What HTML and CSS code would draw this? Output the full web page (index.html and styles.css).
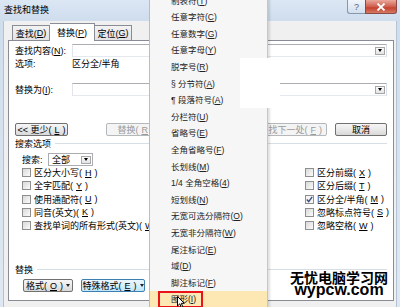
FILE: index.html
```html
<!DOCTYPE html>
<html lang="zh-CN">
<head>
  <meta charset="UTF-8">
  <meta name="viewport" content="width=device-width, initial-scale=1.0">
  <title>查找和替换</title>
  <link rel="stylesheet" href="styles.css">
</head>
<body>
  <div class="win">
    <div class="titlebar">
      <span class="title">查找和替换</span>
      <div class="caption">
        <span class="cap-help">?</span>
        <span class="cap-close">
          <svg width="10" height="8" viewBox="0 0 10 8"><path d="M1.5 0.5 L8.5 7.5 M8.5 0.5 L1.5 7.5" stroke="#fff" stroke-width="1.8"/></svg>
        </span>
      </div>
    </div>

    <div class="client">
      <div class="tabs">
        <span class="tab t1">查找(<u>D</u>)</span>
        <span class="tab t2 active">替换(<u>P</u>)</span>
        <span class="tab t3">定位(<u>G</u>)</span>
      </div>

      <div class="panel">
        <div class="field">
          <span class="lbl">查找内容(<u>N</u>):</span>
          <div class="combo"><span class="drop"></span></div>
        </div>
        <div class="opts">
          <span class="lbl">选项:</span>
          <span>区分全/半角</span>
        </div>
        <div class="field replace">
          <span class="lbl">替换为(<u>I</u>):</span>
          <div class="combo"><span class="drop"></span></div>
        </div>

        <div class="actions">
          <button class="btn b-less">&lt;&lt; 更少(<u>L</u>)</button>
          <button class="btn b-rep" disabled>替换(<u>R</u>)</button>
          <button class="btn b-all" disabled>全部替换(<u>A</u>)</button>
          <button class="btn b-next" disabled>查找下一处(<u>F</u>)</button>
          <button class="btn b-cancel">取消</button>
        </div>

        <div class="group">搜索选项</div>
        <div class="search">
          <span class="search-lbl">搜索:</span>
          <div class="select">全部<span class="drop"></span></div>
        </div>

        <div class="checks">
          <label class="chk"><span class="box"></span>区分大小写(<u>H</u>)</label>
          <label class="chk"><span class="box"></span>区分前缀(<u>X</u>)</label>
          <label class="chk"><span class="box"></span>全字匹配(<u>Y</u>)</label>
          <label class="chk"><span class="box"></span>区分后缀(<u>T</u>)</label>
          <label class="chk"><span class="box"></span>使用通配符(<u>U</u>)</label>
          <label class="chk"><span class="box on"><svg width="7" height="7" viewBox="0 0 7 7"><path d="M0.8 3.6 L2.7 5.6 L6.2 0.9" fill="none" stroke="#3b4f7a" stroke-width="1.4"/></svg></span>区分全/半角(<u>M</u>)</label>
          <label class="chk"><span class="box"></span>同音(英文)(<u>K</u>)</label>
          <label class="chk"><span class="box"></span>忽略标点符号(<u>S</u>)</label>
          <label class="chk"><span class="box"></span>查找单词的所有形式(英文)(<u>W</u>)</label>
          <label class="chk"><span class="box"></span>忽略空格(<u>W</u>)</label>
        </div>

        <div class="group g2">替换</div>
        <div class="fmt">
          <button class="btn b-fmt">格式(<u>O</u>) <span class="tri"></span></button>
          <button class="btn b-special">特殊格式(<u>E</u>)<span class="tri"></span></button>
        </div>
      </div>
    </div>
  </div>

  <ul class="menu">
    <li>制表符(<u>T</u>)</li>
    <li>任意字符(<u>C</u>)</li>
    <li>任意数字(<u>G</u>)</li>
    <li>任意字母(<u>Y</u>)</li>
    <li>脱字号(<u>R</u>)</li>
    <li>§ 分节符(<u>A</u>)</li>
    <li>¶ 段落符号(<u>A</u>)</li>
    <li>分栏符(<u>U</u>)</li>
    <li>省略号(<u>E</u>)</li>
    <li>全角省略号(<u>F</u>)</li>
    <li>长划线(<u>M</u>)</li>
    <li>1/4 全角空格(<u>4</u>)</li>
    <li>短划线(<u>N</u>)</li>
    <li>无宽可选分隔符(<u>O</u>)</li>
    <li>无宽非分隔符(<u>W</u>)</li>
    <li>尾注标记(<u>E</u>)</li>
    <li>域(<u>D</u>)</li>
    <li>脚注标记(<u>F</u>)</li>
    <li class="hot">
      图形(<u>I</u>)
      <span class="redbox"></span>
      <svg class="pointer" width="8" height="12" viewBox="0 0 8 12"><path d="M0.5 0.5 L0.5 10 L2.8 7.8 L4.4 11.4 L5.8 10.8 L4.3 7.3 L7.3 7.3 Z" fill="#fff" stroke="#000" stroke-width="1"/></svg>
    </li>
  </ul>

  <div class="patch"></div>

  <div class="mark">
    <div class="mark-cn">无忧电脑学习网</div>
    <div class="mark-en">wypcw.com</div>
  </div>
</body>
</html>
```

FILE: styles.css
```css
body { margin: 0; width: 400px; height: 307px; overflow: hidden; position: relative; font: 9px "Liberation Sans", "Noto Sans CJK SC", sans-serif; color: #000; text-autospace: no-autospace; }
u { text-decoration: underline; }

.win { height: 307px; background: linear-gradient(#dce7f4, #cfdded 20px, #dfe8f2); }
.titlebar { height: 21px; display: flex; justify-content: space-between; align-items: flex-start; padding: 0 3px 0 4px; }
.title { line-height: 20px; }
.caption { display: flex; }
.cap-help { width: 18px; height: 14px; box-sizing: border-box; border: 1px solid #8797ad; border-top: none; border-right: none; border-radius: 0 0 0 3px; background: linear-gradient(#f1f5fb, #d3dfee); color: #52657f; display: flex; align-items: center; justify-content: center; font-size: 9px; }
.cap-close { width: 32px; height: 14px; box-sizing: border-box; border: 1px solid #8c4a44; border-top: none; border-radius: 0 0 3px 0; background: linear-gradient(#e9a99b, #d0604f 50%, #c4432f 60%, #d57a63); display: flex; align-items: center; justify-content: center; }

.client { margin: 0 3px; height: 286px; box-sizing: border-box; border-left: 1px solid #b3c3d6; border-right: 1px solid #b3c3d6; background: #f0f0f0; padding: 0 2px 0 4px; }

.tabs { display: flex; align-items: flex-end; height: 19px; padding-left: 4px; }
.tab { height: 15px; box-sizing: border-box; border: 1px solid #898c95; border-bottom: none; background: linear-gradient(#f3f3f3, #e3e3e3); display: flex; align-items: center; justify-content: center; }
.t1 { width: 38px; }
.t2 { width: 45px; }
.t3 { width: 37px; border-left: none; }
.tab.active { height: 18px; margin-bottom: -1px; background: #fff; position: relative; z-index: 1; border-left: none; }

.panel { height: 261px; box-sizing: border-box; border: 1px solid #898c95; background: #fff; padding: 3px 6px 0 6px; }

.field, .opts { display: flex; align-items: center; height: 13px; }
.lbl { width: 57px; flex: none; }
.replace { margin-top: 13px; }
.combo { flex: 1; height: 13px; box-sizing: border-box; border: 1px solid #abadb3; border-color: #abadb3 #dbdfe6 #e3e9ef #e2e3ea; display: flex; justify-content: flex-end; align-items: center; padding-right: 1px; }
.drop { width: 10px; height: 8px; box-sizing: border-box; border: 1px solid #a7a7a7; background: linear-gradient(#fafafa, #e4e4e4); display: flex; align-items: center; justify-content: center; }
.drop::after { content: ""; border-top: 3px solid #000; border-left: 2.5px solid transparent; border-right: 2.5px solid transparent; }

.actions { display: flex; margin-top: 27px; height: 13px; }
.btn { font: inherit; color: #000; padding: 0; height: 13px; box-sizing: border-box; border: 1px solid #707070; border-radius: 2px; background: linear-gradient(#f6f6f6, #e9e9e9 50%, #d8d8d8); display: flex; align-items: center; justify-content: center; gap: 3px; }
.btn:disabled { border-color: #b5b8ba; background: #f4f4f4; color: #9a9a9a; }
.b-less { width: 53px; }
.b-rep { width: 60px; margin-left: 38px; }
.b-all { width: 73px; margin-left: 8px; }
.b-next { width: 73px; margin-left: 8px; }
.b-cancel { width: 52px; margin-left: 8px; }

.group { display: flex; align-items: center; height: 12px; margin-top: 1px; }
.group::after { content: ""; flex: 1; height: 1px; background: #d5dfe5; margin-left: 4px; }
.g2 { margin-top: 31px; }

.search { display: flex; align-items: center; height: 13px; margin-top: 4px; padding-left: 7px; }
.search-lbl { width: 26px; }
.select { width: 45px; height: 13px; box-sizing: border-box; border: 1px solid #abadb3; display: flex; align-items: center; justify-content: space-between; padding: 0 1px 0 3px; }

.checks { display: grid; grid-template-columns: 283px auto; grid-auto-rows: 13.25px; padding-left: 7px; }
.chk { display: flex; align-items: center; gap: 3px; white-space: nowrap; }
.box { width: 9px; height: 9px; box-sizing: border-box; border: 1px solid #8f8f8f; background: linear-gradient(135deg, #d9d9d9, #fbfbfb); display: flex; align-items: center; justify-content: center; }
.box.on { background: #f4f4f4; }

.fmt { display: flex; gap: 8px; margin-top: 4px; padding-left: 8px; }
.b-fmt { width: 50px; }
.b-special { width: 64px; border-color: #3c7fb1; background: linear-gradient(#eaf6fd, #d9f0fc 50%, #bee6fd); }
.tri { border-top: 3px solid #222; border-left: 2.5px solid transparent; border-right: 2.5px solid transparent; }

.menu { position: absolute; left: 149px; top: -7.3px; width: 119px; margin: 0; padding: 0; list-style: none; box-sizing: border-box; background: #f6f6f6; border-left: 1px solid #bcbcbc; border-right: 1px solid #c6c6c6; box-shadow: 2px 0 2px rgba(0, 0, 0, 0.12); font-size: 8.5px; color: #222; }
.menu li { height: 16.6px; line-height: 16.6px; padding-left: 21px; white-space: nowrap; }
.menu li.hot { background: #fde7b3; position: relative; }
.redbox { position: absolute; left: 8px; top: 0; width: 45px; height: 17px; box-sizing: border-box; border: 2px solid #e8141a; }
.pointer { position: absolute; left: 27px; top: 5px; }

.patch { position: absolute; left: 240px; top: 58px; width: 40px; height: 50px; background: #fff; }

.mark { position: absolute; left: 287px; top: 271px; width: 104px; text-align: center; font-weight: 700; color: #000; }
.mark-cn { font: 700 14px/13px "Noto Sans CJK SC", sans-serif; }
.mark-en { font: 700 16px/12px "Liberation Sans", sans-serif; }
```
